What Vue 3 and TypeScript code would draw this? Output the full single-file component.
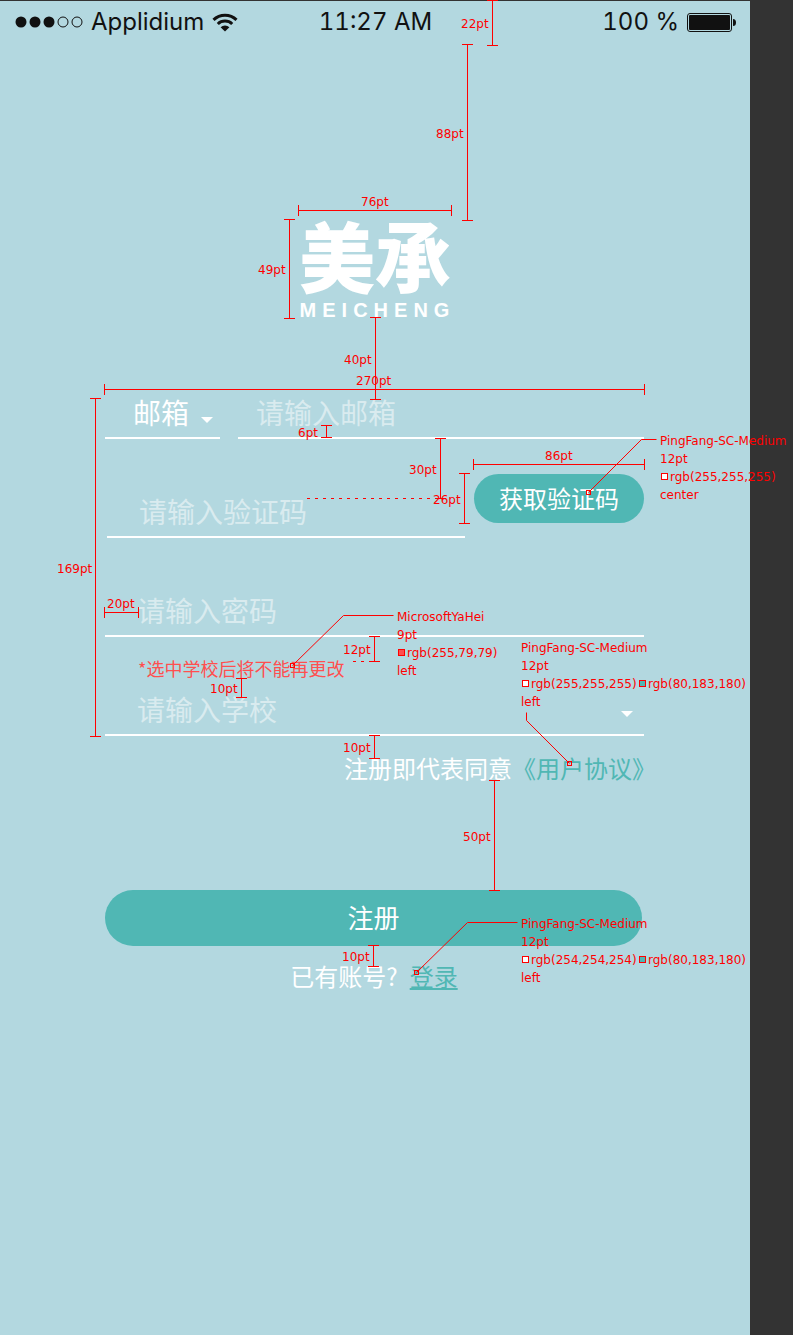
<script setup lang="ts">
import { ref } from 'vue'

interface Measure {
  dir: 'h' | 'v'
  at: number
  from: number
  to: number
  label: string
  x: number
  y: number
}

interface Note {
  x: number
  y: number
  font: string
  size: string
  colors: { x: number; fill: string; text: string }[]
  align: string
  leader: string
  targetX: number
  targetY: number
}

const account = ref('')
const accountType = ref('email')
const code = ref('')
const password = ref('')
const school = ref('')

const measures: Measure[] = [
  { dir: 'v', at: 492, from: 0, to: 45, label: '22pt', x: 461, y: 28 },
  { dir: 'v', at: 467, from: 44, to: 220, label: '88pt', x: 436, y: 138 },
  { dir: 'h', at: 210, from: 298, to: 451, label: '76pt', x: 361, y: 206 },
  { dir: 'v', at: 289, from: 219, to: 318, label: '49pt', x: 258, y: 274 },
  { dir: 'v', at: 375, from: 317, to: 399, label: '40pt', x: 344, y: 364 },
  { dir: 'h', at: 389, from: 104, to: 644, label: '270pt', x: 356, y: 385 },
  { dir: 'v', at: 95, from: 398, to: 736, label: '169pt', x: 57, y: 573 },
  { dir: 'v', at: 326, from: 425, to: 437, label: '6pt', x: 298, y: 437 },
  { dir: 'v', at: 440, from: 438, to: 498, label: '30pt', x: 409, y: 474 },
  { dir: 'h', at: 464, from: 473, to: 644, label: '86pt', x: 545, y: 460 },
  { dir: 'v', at: 464, from: 473, to: 523, label: '26pt', x: 433, y: 504 },
  { dir: 'h', at: 612, from: 104, to: 138, label: '20pt', x: 107, y: 608 },
  { dir: 'v', at: 374, from: 636, to: 661, label: '12pt', x: 343, y: 654 },
  { dir: 'v', at: 241, from: 678, to: 697, label: '10pt', x: 210, y: 693 },
  { dir: 'v', at: 374, from: 735, to: 758, label: '10pt', x: 343, y: 752 },
  { dir: 'v', at: 494, from: 780, to: 890, label: '50pt', x: 463, y: 841 },
  { dir: 'v', at: 373, from: 945, to: 966, label: '10pt', x: 342, y: 961 },
]

const notes: Note[] = [
  {
    x: 660, y: 445, font: 'PingFang-SC-Medium', size: '12pt',
    colors: [{ x: 0, fill: '#ffffff', text: 'rgb(255,255,255)' }],
    align: 'center', leader: '656,439 641,439 588,492', targetX: 586, targetY: 490,
  },
  {
    x: 397, y: 621, font: 'MicrosoftYaHei', size: '9pt',
    colors: [{ x: 0, fill: '#ff4f4f', text: 'rgb(255,79,79)' }],
    align: 'left', leader: '393,615 343,615 292,665', targetX: 290, targetY: 663,
  },
  {
    x: 521, y: 652, font: 'PingFang-SC-Medium', size: '12pt',
    colors: [
      { x: 0, fill: '#ffffff', text: 'rgb(255,255,255)' },
      { x: 117, fill: '#50b7b4', text: 'rgb(80,183,180)' },
    ],
    align: 'left', leader: '526,712 526,720 569,763', targetX: 567, targetY: 761,
  },
  {
    x: 521, y: 928, font: 'PingFang-SC-Medium', size: '12pt',
    colors: [
      { x: 0, fill: '#fefefe', text: 'rgb(254,254,254)' },
      { x: 117, fill: '#50b7b4', text: 'rgb(80,183,180)' },
    ],
    align: 'left', leader: '517,922 467,922 416,972', targetX: 414, targetY: 970,
  },
]

// Strokes sit on half pixels so that one-pixel rules stay sharp.
function measurePath(m: Measure): string {
  const mid = m.at + 0.5
  const start = m.from + 0.5
  const end = m.to + 0.5
  const cap = m.at - 5
  return m.dir === 'v'
    ? `M${mid} ${m.from}V${m.to + 1}M${cap} ${start}h11M${cap} ${end}h11`
    : `M${m.from} ${mid}H${m.to + 1}M${start} ${cap}v11M${end} ${cap}v11`
}
</script>

<template>
  <div class="board">
    <main class="screen">
      <header class="status">
        <div class="carrier">
          <svg width="68" height="12" viewBox="0 0 68 12" aria-hidden="true">
            <circle cx="6" cy="6" r="5.5" />
            <circle cx="20" cy="6" r="5.5" />
            <circle cx="34" cy="6" r="5.5" />
            <circle class="hollow" cx="48" cy="6" r="5" />
            <circle class="hollow" cx="62" cy="6" r="5" />
          </svg>
          <span>Applidium</span>
          <svg width="26" height="19" viewBox="0 0 26 19" aria-hidden="true">
            <path class="wave" d="M1.500 6.800a16.500 16.500 0 0 1 23 0M5.800 11a10.400 10.400 0 0 1 14.400 0" />
            <path d="M8.600 14.200a6.300 6.300 0 0 1 8.800 0L13 18.600z" />
          </svg>
        </div>
        <time>11:27 AM</time>
        <div class="power">
          <span>100 %</span>
          <svg width="49" height="19" viewBox="0 0 49 19" aria-hidden="true">
            <rect class="hollow" x=".5" y=".5" width="44" height="18" rx="2.5" />
            <rect x="2" y="2" width="41" height="15" rx="1" />
            <path d="M46 6q3 0 3 3.500t-3 3.500z" />
          </svg>
        </div>
      </header>

      <h1 class="logo">
        <span class="logo-name">美承</span>
        <span class="logo-latin">MEICHENG</span>
      </h1>

      <form class="form" @submit.prevent>
        <div class="row account">
          <div class="picker type">
            <select v-model="accountType" class="field" aria-label="账号类型">
              <option value="email">邮箱</option>
            </select>
            <svg class="arrow" width="12" height="6" viewBox="0 0 12 6" aria-hidden="true"><path d="M0 0h12L6 6z" /></svg>
          </div>
          <input v-model="account" class="field email" type="email" placeholder="请输入邮箱" aria-label="邮箱" />
        </div>
        <div class="row verify">
          <input v-model="code" class="field" type="text" placeholder="请输入验证码" aria-label="验证码" />
          <button class="code" type="button">获取验证码</button>
        </div>
        <div class="row">
          <input v-model="password" class="field" type="password" placeholder="请输入密码" aria-label="密码" />
        </div>
        <p class="hint">*选中学校后将不能再更改</p>
        <div class="picker">
          <select v-model="school" class="field empty" aria-label="学校">
            <option value="" disabled>请输入学校</option>
          </select>
          <svg class="arrow" width="12" height="6" viewBox="0 0 12 6" aria-hidden="true"><path d="M0 0h12L6 6z" /></svg>
        </div>
        <p class="terms">注册即代表同意<a href="#terms">《用户协议》</a></p>
        <button class="submit" type="submit">注册</button>
        <p class="login"><span>已有账号?</span><a href="#login">登录</a></p>
      </form>
    </main>

    <svg class="specs" width="793" height="1335" viewBox="0 0 793 1335">
      <g v-for="(m, i) in measures" :key="i">
        <path class="rule" :d="measurePath(m)" />
        <text :x="m.x" :y="m.y">{{ m.label }}</text>
      </g>
      <path class="rule dashed" d="M307 498.500H437M353 661.500H365" />
      <g v-for="(n, i) in notes" :key="'n' + i">
        <polyline class="leader" :points="n.leader" transform="translate(.5 .5)" />
        <rect class="target" :x="n.targetX + 0.5" :y="n.targetY + 0.5" width="4" height="4" />
        <text :x="n.x" :y="n.y">{{ n.font }}</text>
        <text :x="n.x" :y="n.y + 18">{{ n.size }}</text>
        <g v-for="c in n.colors" :key="c.x">
          <rect class="swatch" :x="n.x + c.x + 1.5" :y="n.y + 28.5" width="6" height="6" :fill="c.fill" />
          <text :x="n.x + c.x + 10" :y="n.y + 36">{{ c.text }}</text>
        </g>
        <text :x="n.x" :y="n.y + 54">{{ n.align }}</text>
      </g>
    </svg>
  </div>
</template>

<style>
body {
  margin: 0;
  background: #333333;
}
</style>

<style scoped>
.board {
  position: relative;
  box-sizing: border-box;
  min-height: 100vh;
  padding-top: 1px;
  overflow: hidden;
  display: flex;
  background: #333333;
  font-family: "Noto Sans CJK SC", "Noto Sans", sans-serif;
}
.screen {
  width: 100%;
  max-width: 750px;
  background: #b3d8e0;
}
.status {
  display: grid;
  grid-template-columns: 1fr auto 1fr;
  align-items: center;
  height: 42px;
  padding: 0 14px 0 15px;
  color: #111111;
  font: 24px/42px Inter, sans-serif;
  font-variant-numeric: tabular-nums;
}
.status svg {
  fill: #111111;
}
.carrier,
.power {
  display: flex;
  align-items: center;
  gap: 8px;
}
.power {
  justify-content: flex-end;
}
.status .hollow {
  fill: none;
  stroke: #111111;
}
.status .wave {
  fill: none;
  stroke: #111111;
  stroke-width: 3;
}
.logo {
  display: flex;
  flex-direction: column;
  align-items: center;
  gap: 10px;
  margin: 173px 0 71px;
  color: #ffffff;
}
.logo-name {
  font-size: 76px;
  font-weight: 900;
  line-height: 76px;
}
.logo-latin {
  padding-left: 5px;
  font: bold 20px/16px "Liberation Sans", sans-serif;
  letter-spacing: 6px;
}
.form {
  box-sizing: border-box;
  width: 100%;
  max-width: 540px;
  margin: 0 auto;
  padding-right: 1px;
  color: #ffffff;
}
.row {
  display: flex;
}
.account {
  gap: 18px;
  margin-bottom: 35px;
}
.picker {
  position: relative;
}
.type {
  flex: 0 0 115px;
}
.field {
  box-sizing: border-box;
  display: block;
  width: 100%;
  min-width: 0;
  height: 50px;
  margin: 0;
  padding: 0 0 3px 32px;
  border: 0;
  border-bottom: 2px solid #ffffff;
  border-radius: 0;
  outline: 0;
  appearance: none;
  background: transparent;
  color: #ffffff;
  font: inherit;
  font-size: 28px;
}
.field::placeholder {
  color: #d9ebef;
  opacity: 1;
}
.field.empty {
  color: #d9ebef;
}
.type .field {
  padding-left: 28px;
}
.email {
  padding-left: 18px;
}
.arrow {
  position: absolute;
  right: 11px;
  bottom: 19px;
  fill: #ffffff;
  pointer-events: none;
}
.type .arrow {
  right: 7px;
  bottom: 16px;
}
.verify {
  align-items: flex-end;
  gap: 9px;
  min-height: 64px;
  margin-bottom: 49px;
  padding-left: 2px;
}
.code,
.submit {
  padding: 0 0 3px;
  border: 0;
  border-radius: 28px;
  background: #50b7b4;
  color: #ffffff;
  font-family: inherit;
  cursor: pointer;
}
.code {
  flex: 0 0 170px;
  align-self: flex-start;
  height: 49px;
  font-size: 24px;
}
.hint {
  margin: 0;
  padding: 19px 0 6px 33px;
  color: #ff4f4f;
  font-size: 18px;
  line-height: 24px;
}
.terms {
  margin: 16px -12px 106px 0;
  font-size: 24px;
  line-height: 32px;
  text-align: right;
}
.terms a {
  color: #50b7b4;
  text-decoration: none;
}
.submit {
  display: block;
  width: calc(100% - 2px);
  height: 56px;
  font-size: 26px;
}
.login {
  display: flex;
  justify-content: center;
  gap: 12px;
  margin: 14px 1px 0 0;
  font-size: 24px;
  line-height: 32px;
}
.login a {
  color: #50b7b4;
}
.specs {
  position: absolute;
  top: 0;
  left: 0;
  pointer-events: none;
}
.specs text {
  fill: #ff0000;
  font: 12px "DejaVu Sans", sans-serif;
}
.rule,
.leader {
  fill: none;
  stroke: #ff0000;
  stroke-width: 1;
}
.dashed {
  stroke-dasharray: 3 5;
}
.target {
  fill: none;
  stroke: #ff0000;
}
.swatch {
  stroke: #ff0000;
}
</style>
